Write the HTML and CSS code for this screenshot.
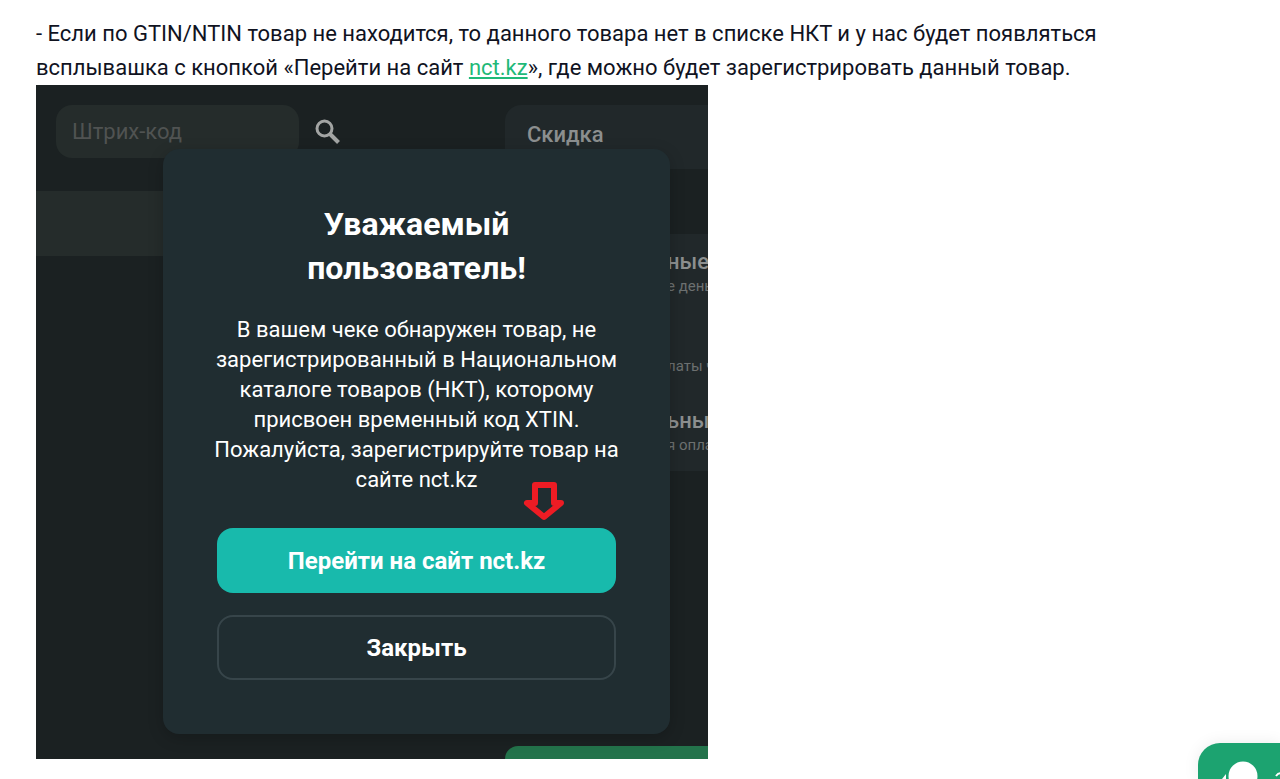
FILE: index.html
```html
<!DOCTYPE html>
<html lang="ru">
<head>
  <meta charset="UTF-8">
  <meta name="viewport" content="width=device-width, initial-scale=1.0">
  <title>НКТ</title>
  <link rel="stylesheet" href="styles.css">
</head>
<body>
  <main class="article">
    <p class="article-text">- Если по GTIN/NTIN товар не находится, то данного товара нет в списке НКТ и у нас будет появляться всплывашка с кнопкой «Перейти на сайт <a href="https://nct.kz">nct.kz</a>», где можно будет зарегистрировать данный товар.</p>

    <div class="app">
      <div class="cart">
        <div class="search">
          <input type="text" class="search-input" placeholder="Штрих-код" aria-label="Штрих-код">
          <svg class="search-icon" viewBox="0 0 26 26" fill="none" stroke="#a3a5a4" stroke-width="3">
            <circle cx="9.5" cy="9.5" r="7.5"/>
            <path d="M14.500 14.500L23.500 23.500" stroke-width="4"/>
          </svg>
        </div>
        <div class="cart-row"></div>
      </div>
      <div class="payment">
        <div class="discount">Скидка</div>
        <div class="methods">
          <div class="method">
            <div class="method-name">ные</div>
            <div class="method-note">е деньги</div>
          </div>
          <div class="method method-single">
            <div class="method-note">латы ч</div>
          </div>
          <div class="method">
            <div class="method-name">ьный</div>
            <div class="method-note">я оплата</div>
          </div>
        </div>
        <div class="pay-bar"></div>
      </div>

      <div class="modal" role="dialog" aria-labelledby="modal-title">
        <h2 id="modal-title">Уважаемый пользователь!</h2>
        <p>В вашем чеке обнаружен товар, не зарегистрированный в Национальном каталоге товаров (НКТ), которому присвоен временный код XTIN. Пожалуйста, зарегистрируйте товар на сайте nct.kz</p>
        <button type="button" class="btn btn-primary">Перейти на сайт nct.kz</button>
        <button type="button" class="btn btn-outline">Закрыть</button>
        <svg class="arrow" viewBox="0 0 42 40" fill="none" stroke="#ed1c24" stroke-width="6" stroke-linejoin="round">
          <path d="M12 4H31V22H38L21 36L4 22H12Z"/>
        </svg>
      </div>
    </div>
  </main>

  <button type="button" class="chat" aria-label="Чат">
    <svg viewBox="0 0 82 36" fill="#fff">
      <circle cx="45" cy="33" r="14.5"/>
      <path d="M24 36L28 31V36Z"/>
      <path d="M78 33q3-4 6-2" fill="none" stroke="#fff" stroke-width="2"/>
    </svg>
  </button>
</body>
</html>
```

FILE: styles.css
```css
* { margin: 0; padding: 0; box-sizing: border-box; }
body { font-family: Roboto, "Liberation Sans", sans-serif; background-color: #fff; color: #10131f; }
button, input { font-family: inherit; }

.article { max-width: 1180px; padding: 17px 36px 20px; }
.article-text { font-size: 22px; line-height: 34px; }
.article-text a { color: #1fb978; text-decoration-thickness: 2px; text-underline-offset: 2px; }

/* cash register */
.app { position: relative; display: flex; max-width: 672px; background-color: #1b2122; overflow: hidden; }
.cart { width: 469px; flex-shrink: 0; padding-top: 20px; }
.search { display: flex; align-items: center; gap: 16px; padding-left: 20px; }
.search-input { width: 243px; height: 53px; padding: 0 16px; border: none; border-radius: 16px; background-color: #252c2b; color: #9b9d9c; font-size: 22px; }
.search-input::placeholder { color: #505352; }
.search-icon { width: 26px; height: 26px; }
.cart-row { height: 65px; margin-top: 33px; background-color: #252c2b; }

.payment { flex: 1; min-width: 0; padding-top: 20px; white-space: nowrap; color: #8c8f8f; }
.discount { height: 64px; padding-left: 22px; border-radius: 16px 0 0 16px; background-color: #21282a; font-size: 22px; font-weight: 500; line-height: 60px; }
.methods { margin-top: 65px; padding: 15px 0 15px 162px; border-radius: 16px 0 0 16px; background-color: #21282a; overflow: hidden; }
.method-single { margin: 58px 0 31px; }
.method-name { font-size: 22px; font-weight: 500; line-height: 26px; }
.method-note { font-size: 15px; line-height: 22px; color: #6c7070; }
.pay-bar { height: 13px; margin-top: 275px; border-radius: 16px 0 0 0; background-color: #23734b; }

/* popup */
.modal { position: absolute; top: 64px; left: 127px; width: 507px; padding: 53px 54px 54px; border-radius: 16px; background-color: #202d31; box-shadow: 0 4px 16px rgba(0, 0, 0, 0.2); color: #fff; text-align: center; }
.modal h2 { padding: 0 60px; font-size: 32px; font-weight: 700; line-height: 44px; }
.modal p { margin: 25px -8px 33px; font-size: 22px; line-height: 30px; }
.btn { display: block; width: 100%; height: 65px; border: none; border-radius: 16px; color: #fff; font-size: 24px; font-weight: 700; cursor: pointer; }
.btn-primary { background-color: #18baac; }
.btn-outline { margin-top: 22px; border: 2px solid #37454a; background-color: transparent; }
.arrow { position: absolute; top: 332px; right: 105px; width: 42px; height: 40px; }

.chat { position: fixed; right: 0; bottom: 0; width: 82px; height: 36px; border: none; border-radius: 22px 0 0 0; background-color: #1ca370; box-shadow: 0 0 16px rgba(0, 0, 0, 0.08); cursor: pointer; }
.chat svg { display: block; width: 82px; height: 36px; }
```
